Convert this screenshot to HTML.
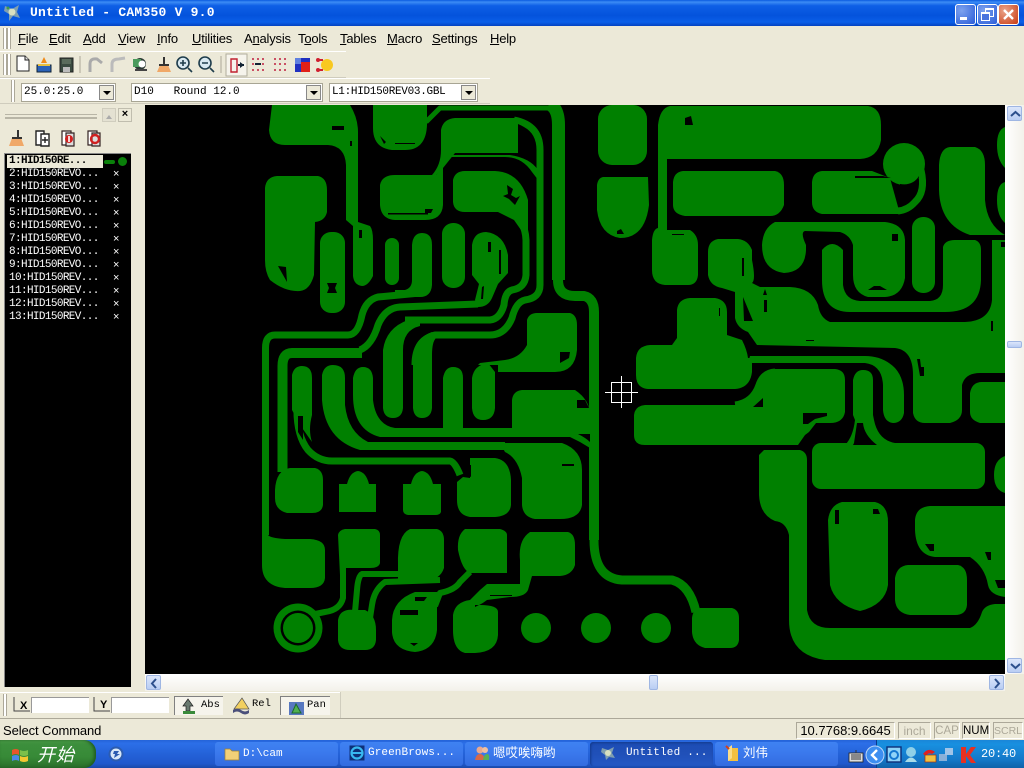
<!DOCTYPE html>
<html><head><meta charset="utf-8"><title>Untitled - CAM350 V 9.0</title>
<style>
html,body{margin:0;padding:0;width:1024px;height:768px;overflow:hidden;background:#ece9d8}
body{position:relative;font-family:"Liberation Sans","Noto Sans CJK SC",sans-serif;font-size:12.5px;color:#000}
.a{position:absolute}
.m{font-family:"Liberation Mono","Noto Sans CJK SC",monospace}
#title{left:0;top:0;width:1024px;height:26px;background:linear-gradient(#0a5be0 0,#3c8cf5 8%,#0e5fe6 22%,#0453dc 60%,#0a5fe8 85%,#0342c0 100%)}
.wb{top:4px;width:19px;height:19px;border:1px solid #fff;border-radius:3px;background:radial-gradient(circle at 30% 30%,#7da2ee,#2a5cd8)}
.mi{top:31px;line-height:15px;font-size:13px;letter-spacing:-.2px}
.mi u{text-decoration:underline}
.tb{background:#ece9d8;box-shadow:inset 0 1px #fff,inset 0 -1px #cfccbd}
.grip{width:2px;background:#fff;border-left:1px solid #aca899;border-right:1px solid #aca899}
.combo{background:#fff;border:1px solid #a8a594;box-sizing:border-box;height:19px;font-size:11px;line-height:17px;padding-left:2px;white-space:pre}
.dd{right:1px;top:1px;width:15px;height:15px;background:#ece9d8;border:1px solid #888;box-sizing:border-box}
.dd:after{content:"";position:absolute;left:3px;top:5px;border:4px solid transparent;border-top:4px solid #000}
.li{left:9px;font-size:11px;letter-spacing:-.62px;color:#fff;line-height:13px;white-space:pre}
.x{left:113px;color:#fff;font-size:11px;line-height:13px}
.sb{background:linear-gradient(#fff,#f3f1ea);}
.sbtn{background:linear-gradient(#dbe6fb,#b9cdf3);border:1px solid #9fb6e3;box-sizing:border-box;border-radius:2px;color:#2c4f8c;font-weight:bold;text-align:center}
.pane{top:722px;height:17px;box-sizing:border-box;border:1px solid;border-color:#aca899 #fff #fff #aca899;font-size:12px;line-height:16px;text-align:center;white-space:pre;overflow:hidden}
#task{left:0;top:740px;width:1024px;height:28px;background:linear-gradient(#2463d8 0,#2c6fe8 12%,#2462d8 50%,#2058cc 85%,#1a48a8 100%)}
.tk{top:2px;height:24px;width:123px;border-radius:3px;background:linear-gradient(#3f82f2,#3a78ec 50%,#336ce0);color:#fff;font-size:11px;line-height:23px;box-sizing:border-box;white-space:pre}
</style></head><body>

<div class="a" id="title"></div>
<svg class="a" style="left:3px;top:3px" width="18" height="19"><path d="M2 3 9 6 16 2 14 9 17 15 10 13 6 18 6 11 1 8Z" fill="#7f9fb0"/><circle cx="9" cy="9" r="3.5" fill="#d8e0c0"/><circle cx="5" cy="5" r="1.5" fill="#3f9a4c"/></svg>
<div class="a m" style="left:30px;top:5px;color:#fff;font-weight:bold;font-size:13px;letter-spacing:.23px;line-height:16px;white-space:pre">Untitled - CAM350 V 9.0</div>
<div class="a wb" style="left:955px"><div class="a" style="left:4px;top:12px;width:7px;height:3px;background:#fff"></div></div>
<div class="a wb" style="left:977px"><div class="a" style="left:7px;top:3px;width:7px;height:6px;border:1px solid #fff;border-top-width:2px"></div><div class="a" style="left:3px;top:7px;width:7px;height:6px;border:1px solid #fff;border-top-width:2px;background:#4a74de"></div></div>
<div class="a wb" style="left:998px;background:radial-gradient(circle at 30% 30%,#eaa48a,#c83a12)"><svg class="a" style="left:3px;top:3px" width="13" height="13"><path d="M2 2 11 11M11 2 2 11" stroke="#fff" stroke-width="2.4"/></svg></div>

<div class="a" style="left:0;top:26px;width:1024px;height:79px;background:#ece9d8"></div>
<div class="a grip" style="left:3px;top:28px;height:21px"></div><div class="a grip" style="left:7px;top:28px;height:21px"></div>
<div class="a mi" style="left:18px"><u>F</u>ile</div>
<div class="a mi" style="left:49px"><u>E</u>dit</div>
<div class="a mi" style="left:83px"><u>A</u>dd</div>
<div class="a mi" style="left:118px"><u>V</u>iew</div>
<div class="a mi" style="left:157px"><u>I</u>nfo</div>
<div class="a mi" style="left:192px"><u>U</u>tilities</div>
<div class="a mi" style="left:244px">A<u>n</u>alysis</div>
<div class="a mi" style="left:298px">T<u>o</u>ols</div>
<div class="a mi" style="left:340px"><u>T</u>ables</div>
<div class="a mi" style="left:387px"><u>M</u>acro</div>
<div class="a mi" style="left:432px"><u>S</u>ettings</div>
<div class="a mi" style="left:490px"><u>H</u>elp</div>

<div class="a tb" style="left:0;top:51px;width:346px;height:27px"></div>
<div class="a tb" style="left:0;top:78px;width:490px;height:26px"></div>
<div class="a grip" style="left:3px;top:54px;height:21px"></div><div class="a grip" style="left:7px;top:54px;height:21px"></div>
<div class="a grip" style="left:11px;top:80px;height:22px"></div>
<svg class="a" style="left:0;top:51px" width="346" height="27">
<path d="M17 5h8l4 4v11H17Z" fill="#fff" stroke="#222"/><path d="M25 5v4h4" fill="#ddd" stroke="#222"/>
<path d="M37 14h14v7H37Z" fill="#2b62b8" stroke="#123"/><path d="M41 12 44 6l3 6Z" fill="#f08a18"/><path d="M38 13h12v2H38Z" fill="#e8c040"/>
<path d="M60 7h13v14H60Z" fill="#3a4a40" stroke="#222"/><path d="M62 8h9v5h-9Z" fill="#5a6b5c"/><path d="M63 16h7v5h-7Z" fill="#bbb"/>
<path d="M80 5v17" stroke="#aca899"/>
<path d="M90 21V13Q90 7 97 8l5 4" fill="none" stroke="#aaa" stroke-width="3"/>
<path d="M112 21V13Q112 8 119 8l6-1" fill="none" stroke="#bbb" stroke-width="3"/>
<circle cx="140" cy="13" r="6" fill="#2d3a35"/><path d="M133 8h8v8h-8Z" fill="#4a9a5c"/><circle cx="142" cy="13" r="3.5" fill="#fff"/><path d="M135 19h12" stroke="#444" stroke-width="2"/>
<path d="M157 21l3-7h8l3 7Z" fill="#f0a868"/><path d="M164 6v8M159 14h10" stroke="#333" stroke-width="2"/>
<circle cx="183" cy="12" r="6" fill="#d8e8f0" stroke="#1f3d4c" stroke-width="1.6"/><path d="M180 12h6M183 9v6M188 17l4 4" stroke="#1f3d4c" stroke-width="1.6"/>
<circle cx="205" cy="12" r="6" fill="#d8e8f0" stroke="#1f3d4c" stroke-width="1.6"/><path d="M202 12h6M210 17l4 4" stroke="#1f3d4c" stroke-width="1.6"/>
<path d="M221 5v17" stroke="#aca899"/>
<path d="M226 3h21v22h-21Z" fill="#f6f4ec" stroke="#b0ad9c"/>
<path d="M231 8h6v13h-6Z" fill="none" stroke="#c02030" stroke-width="1.4"/><path d="M238 14h6" stroke="#123" stroke-width="2"/><path d="M240 11l4 3-4 3Z" fill="#123"/>
<g fill="#c02040"><circle cx="253" cy="8" r="1"/><circle cx="258" cy="8" r="1"/><circle cx="263" cy="8" r="1"/><circle cx="253" cy="19" r="1"/><circle cx="258" cy="19" r="1"/><circle cx="263" cy="19" r="1"/><circle cx="253" cy="13" r="1"/><circle cx="263" cy="13" r="1"/></g><path d="M255 13h6" stroke="#123" stroke-width="2"/>
<g fill="#c02040"><circle cx="275" cy="8" r="1"/><circle cx="280" cy="8" r="1"/><circle cx="285" cy="8" r="1"/><circle cx="275" cy="13" r="1"/><circle cx="280" cy="13" r="1"/><circle cx="285" cy="13" r="1"/><circle cx="275" cy="19" r="1"/><circle cx="280" cy="19" r="1"/><circle cx="285" cy="19" r="1"/></g>
<rect x="295" y="7" width="15" height="14" fill="#2030c0"/><rect x="301" y="11" width="9" height="10" fill="#e02018"/><rect x="295" y="7" width="6" height="6" fill="#6080e0"/>
<circle cx="327" cy="14" r="6" fill="#f8c820"/><path d="M317 9h6M317 19h6" stroke="#d02030" stroke-width="2"/><circle cx="318" cy="9" r="2" fill="#d02030"/><circle cx="318" cy="19" r="2" fill="#d02030"/>
</svg>
<div class="a combo m" style="left:21px;top:83px;width:95px">25.0:25.0<div class="a dd"></div></div>
<div class="a combo m" style="left:131px;top:83px;width:192px">D10   Round 12.0<div class="a dd"></div></div>
<div class="a combo m" style="left:329px;top:83px;width:149px;letter-spacing:-.3px">L1:HID150REV03.GBL<div class="a dd"></div></div>

<!-- left panel -->
<div class="a" style="left:0;top:105px;width:145px;height:585px;background:#ece9d8"></div>
<div class="a" style="left:5px;top:114px;width:92px;height:2px;border-top:1px solid #b8b5a6;border-bottom:1px solid #b8b5a6"></div>
<div class="a" style="left:5px;top:118px;width:92px;height:1px;background:#b8b5a6"></div>
<div class="a" style="left:102px;top:108px;width:14px;height:14px;background:#e4e1d2;border:1px solid #d0cdbe;box-sizing:border-box"><div class="a" style="left:3px;top:3px;border:3px solid transparent;border-bottom:4px solid #aaa"></div></div>
<div class="a" style="left:118px;top:108px;width:14px;height:14px;background:#ece9d8;border:1px solid #c0bdae;box-sizing:border-box;text-align:center;font-weight:bold;font-size:11px;line-height:11px">×</div>
<svg class="a" style="left:0;top:128px" width="110" height="20">
<path d="M9 18l3-8h9l3 8Z" fill="#f0a868"/><path d="M18 2v8M12 10h10" stroke="#333" stroke-width="2"/>
<path d="M36 3h8v14H36Z" fill="#fff" stroke="#222" stroke-width="1.4"/><path d="M41 6h8v12h-8Z" fill="#fff" stroke="#222" stroke-width="1.4"/><path d="M45 9v6M42 12h6" stroke="#222" stroke-width="1.4"/>
<path d="M62 3h9v14H62Z" fill="#fff" stroke="#322" stroke-width="1.2"/><path d="M66 5h8v13h-8Z" fill="#ddd" stroke="#322" stroke-width="1.2"/><circle cx="69" cy="11" r="4" fill="#d02020"/><path d="M69 8v6" stroke="#fff" stroke-width="1.6"/>
<path d="M88 3h9v14H88Z" fill="#fff" stroke="#322" stroke-width="1.2"/><path d="M92 5h8v13h-8Z" fill="#ddd" stroke="#322" stroke-width="1.2"/><circle cx="95" cy="11" r="4" fill="none" stroke="#d02020" stroke-width="2.4"/>
</svg>
<div class="a" style="left:4px;top:153px;width:127px;height:534px;background:#000;border-left:1px solid #888;border-top:1px solid #888;box-sizing:border-box"></div>
<div class="a" style="left:7px;top:155px;width:96px;height:13px;background:#ece9d8"></div>
<div class="a li m" style="top:155px;color:#000;font-weight:bold">1:HID150RE...</div>
<div class="a" style="left:104px;top:160px;width:11px;height:4px;background:#0a800a;border-radius:2px"></div>
<div class="a" style="left:118px;top:157px;width:9px;height:9px;background:#0a800a;border-radius:50%"></div>
<div class="a li m" style="top:168px">2:HID150REVO...</div><div class="a x" style="top:168px">×</div>
<div class="a li m" style="top:181px">3:HID150REVO...</div><div class="a x" style="top:181px">×</div>
<div class="a li m" style="top:194px">4:HID150REVO...</div><div class="a x" style="top:194px">×</div>
<div class="a li m" style="top:207px">5:HID150REVO...</div><div class="a x" style="top:207px">×</div>
<div class="a li m" style="top:220px">6:HID150REVO...</div><div class="a x" style="top:220px">×</div>
<div class="a li m" style="top:233px">7:HID150REVO...</div><div class="a x" style="top:233px">×</div>
<div class="a li m" style="top:246px">8:HID150REVO...</div><div class="a x" style="top:246px">×</div>
<div class="a li m" style="top:259px">9:HID150REVO...</div><div class="a x" style="top:259px">×</div>
<div class="a li m" style="top:272px">10:HID150REV...</div><div class="a x" style="top:272px">×</div>
<div class="a li m" style="top:285px">11:HID150REV...</div><div class="a x" style="top:285px">×</div>
<div class="a li m" style="top:298px">12:HID150REV...</div><div class="a x" style="top:298px">×</div>
<div class="a li m" style="top:311px">13:HID150REV...</div><div class="a x" style="top:311px">×</div>

<!-- canvas -->
<svg class="a" style="left:145px;top:105px;background:#000" width="860" height="569" viewBox="145 105 860 569">
<g fill="#008000">
<!-- upper-left pads -->
<path d="M272 105H350Q358 118 358 132V222L370 226Q373 230 373 240V276Q368 286 362 286Q354 285 353 276V226L346 220V165Q345 146 328 145H285Q270 145 269 130Z"/>
<path d="M373 105H427V125Q426 150 405 150H392Q373 148 373 128Z"/>
<path d="M277 176H318Q327 178 327 190V212Q325 221 315 222L314 275Q310 290 300 291Q285 292 270 280Q265 272 265 260V188Q266 177 277 176Z"/>
<rect x="320" y="232" width="25" height="81" rx="11"/>
<rect x="385" y="238" width="14" height="47" rx="7"/>
<rect x="442" y="223" width="23" height="65" rx="11"/>
<path d="M412 245Q413 233 422 233Q432 233 432 245V285Q431 297 420 297H395V290H405Q412 288 412 280Z"/>
<path d="M472 245Q474 232 486 232Q504 234 508 255V273L498 284L492 298Q488 307 478 307L475 300L479 284L472 275Z"/>
<path d="M453 180Q455 171 465 171H495Q520 172 528 200V240L514 220L498 212H465Q454 212 453 202Z"/>
<path d="M380 185Q382 175 395 175H436L443 167V205Q442 220 425 220H395Q381 219 380 205Z"/>
<path d="M441 130Q443 119 455 118H518V153H455L443 168L436 175L432 175Q441 165 441 150Z"/>
<path d="M450 155H510Q530 158 538 170V160H542V185L532 172Q522 157 505 157H450Z"/>
<!-- bottom area pads -->
<path d="M275 490Q276 470 290 468H315Q323 470 323 480V505Q322 513 312 513H287Q275 510 275 498Z"/>
<path d="M339 484H347Q350 472 358 471Q366 472 369 484H376V512H339Z"/>
<path d="M403 484H411Q414 472 422 471Q430 472 433 484H441V512Q440 515 435 515H408Q403 514 403 510Z"/>
<path d="M463 477L470 478L470 458H495Q510 460 511 480V505Q510 516 495 517H470Q457 515 457 500V482Z"/>
<path d="M500 443H562Q582 450 582 470V505Q580 519 560 519H535Q523 517 522 505V478Q518 458 505 452Z"/>
<path d="M262 530L268 535Q270 538 285 539H310Q325 540 325 550V578Q324 588 310 588H285Q262 586 262 565Z"/>
<path d="M345 529H375Q380 530 380 535V563Q379 568 370 568H345L340 575L338 535Q339 530 345 529Z"/>
<path d="M410 529H437Q444 531 444 540V568Q440 580 425 581H398L398 565Q397 535 410 529Z"/>
<path d="M465 529H500Q507 531 507 535V573H470Q462 570 458 550Q457 535 465 529Z"/>
<path d="M530 532H568Q575 534 575 545V565Q572 575 560 576H532L528 590Q525 597 510 597L487 600L480 605Q498 605 498 612V635Q497 652 475 653H465Q453 650 453 630V615Q455 602 470 600L480 590L487 584H520L520 560Q518 540 530 532Z"/>
<path d="M338 620Q340 608 355 610H365Q376 615 376 630V640Q375 650 365 650H350Q339 650 338 640Z"/>
<path d="M392 620Q393 600 415 592L437 592L437 630Q435 650 415 652Q393 650 392 632Z"/>
<circle cx="298" cy="628" r="24.5"/>
<circle cx="536" cy="628" r="15"/><circle cx="596" cy="628" r="15"/><circle cx="656" cy="628" r="15"/>
<path d="M700 608H732Q739 610 739 618V640Q738 648 730 648H705Q693 645 692 632V618Q693 609 700 608Z"/>
<!-- center bands & pads -->
<path d="M292 375Q294 366 302 366Q312 366 312 378V415Q308 430 312 442L300 425L292 410Z"/>
<path d="M322 375Q324 365 333 365Q345 365 345 378V405Q348 432 368 442H505V450H360Q325 440 322 400Z"/>
<path d="M353 378Q355 367 363 367Q372 367 373 378L373 400Q376 425 395 428H578L585 435Q590 440 590 448L580 442L570 437H380Q353 430 353 395Z"/>
<path d="M383 350Q386 328 408 320L420 322V326Q403 330 403 350V408Q402 418 393 418Q384 418 383 408Z"/>
<path d="M413 355Q415 338 432 332L436 338Q432 342 432 355V408Q431 418 422 418Q414 418 413 408Z"/>
<path d="M443 378Q445 367 453 367Q463 367 463 378V428H443Z"/>
<path d="M472 378Q474 365 488 363L495 372V408Q494 420 483 420Q473 420 472 408Z"/>
<path d="M522 390H575Q590 400 590 415V436H512L500 428H512V400Q513 391 522 390Z"/>
<path d="M527 320Q529 313 537 313H570Q577 315 577 325V350Q575 372 555 372H498V365H478L480 363L505 360Q520 358 527 345Z"/>
<!-- right -->
<rect x="598" y="105" width="49" height="60" rx="14"/>
<path d="M603 177H648L649 205Q645 238 620 238Q600 235 597 210V185Q598 178 603 177Z"/>
<path d="M670 106H868Q881 108 881 125V140Q878 158 860 159H667V230H690Q698 235 698 245V275Q697 285 688 285H665Q652 284 652 270V240Q653 229 658 228V125Q660 108 670 106Z"/>
<path d="M683 171H775Q784 173 784 185V205Q780 216 770 216H685Q673 214 673 205V182Q674 172 683 171Z"/>
<path d="M822 171H872L890 178L900 214H822Q812 212 812 202V182Q813 172 822 171Z"/>
<circle cx="904" cy="164" r="21"/>
<path d="M950 147H975Q985 150 985 165V200Q987 225 1005 235H970Q940 225 939 190V165Q940 148 950 147Z"/>
<path d="M1005 127Q997 130 997 145T1005 168ZM1005 182Q997 184 997 200T1005 223Z"/>
<path d="M775 222H885Q904 224 905 240V278Q902 296 885 297H868Q853 293 853 275V245Q850 235 840 232L805 231Q800 232 806 245V250Q805 272 784 273Q762 270 762 245Q763 228 775 222Z"/>
<rect x="912" y="217" width="23" height="76" rx="11"/>
<path d="M822 250Q832 238 843 250V285Q845 300 860 301H930Q943 300 943 285V247Q945 240 955 240H975Q981 242 981 250V280Q980 312 945 312H850Q822 312 822 280Z"/>
<path d="M1005 240H992V300Q990 321 965 322H830Q820 318 818 305Q812 288 790 287H760L752 283Q756 280 752 260V250Q748 240 738 239H718Q708 241 708 252V275Q710 286 722 288L735 292V318Q737 328 748 332L757 345L895 348Q913 350 913 375V413Q915 423 925 423H950Q962 420 962 410V385Q965 373 980 373H1005Z"/>
<path d="M970 393Q972 382 982 382H1005V423H980Q970 420 970 412Z"/>
<path d="M690 298H715Q727 300 727 312V335L742 340Q747 350 748 358H752V372Q750 388 735 389H648Q636 388 636 375V358Q637 346 650 345H672L677 338V310Q678 299 690 298Z"/>
<path d="M750 356H865Q883 356 895 368Q904 378 904 395V413Q902 423 893 423Q884 422 883 410V385Q882 365 865 363H748Z"/>
<path d="M645 405H738Q755 402 760 385Q763 370 775 369H835Q845 370 845 380V412Q843 423 830 423H816L809 432L805 435L798 445H645Q634 445 634 435V415Q635 406 645 405Z"/>
<path d="M853 380Q855 370 863 370Q873 370 873 380V415L874 420Q878 440 895 443L812 445H845Q853 437 855 420L853 415Z"/>
<rect x="812" y="443" width="173" height="46" rx="9"/>
<path d="M764 450H800Q807 452 807 460V610Q810 628 830 628H970Q978 625 982 612Q985 605 995 604H1005V660H825Q789 655 789 620V535Q786 522 775 521Q760 515 759 495V455Z"/>
<path d="M1005 456Q994 460 994 475T1005 493Z"/>
<path d="M842 502H875Q888 505 888 522V585Q885 605 860 611Q835 605 830 585L828 520Q830 505 842 502Z"/>
<path d="M908 565H958Q967 567 967 580V605Q966 615 955 615H910Q896 613 895 600V578Q897 566 908 565Z"/>
<path d="M930 506H1005V597Q990 595 988 585Q985 567 970 557H935Q916 555 915 530V520Q916 507 930 506Z"/>
</g>
<g fill="none" stroke="#008000" stroke-linejoin="round">
<path stroke-width="5" d="M426 122L440 108H552"/>
<path stroke-width="13" d="M549 104Q558.500 108 558.500 125V280"/>
<path stroke-width="10" d="M558 280Q558 296 575 296H584Q594 298 594 312V540"/>
<path stroke-width="9" d="M594 540Q594 578 622 580H672Q690 585 696 612"/>
<path stroke-width="7" d="M420 293L378 297Q366 300 362 315Q358 335 348 335H275Q265.500 335 265.500 348V535"/>
<path stroke-width="7" d="M478 304 400 307Q385 308 378 325Q372 345 360 350"/>
<path stroke-width="10" d="M362 353H292Q282.500 353 282.500 366V472"/>
<path stroke-width="7" d="M514 120Q540 125 540 150V285Q540 298 525 300Q516 302 512 318Q505 335 490 335H435Q415 340 415 365"/>
<path stroke-width="7" d="M500 205Q525 215 526 240V275Q525 288 512 290Q505 292 504 305Q500 319 490 320H405"/>
<path stroke-width="7" d="M297 405Q296 435 308 450Q318 461 332 461H450Q455 462 460 475"/>
<path stroke-width="5" d="M735 404Q752 402 758 385Q762 372 775 371"/>
<path stroke-width="6" d="M343 565 343 598Q340 610 325 612L310 615"/>
<path stroke-width="6" d="M398 574H362Q358 576 357 590L355 612"/>
<path stroke-width="6" d="M440 580 385 582Q374 590 372 605L370 618"/>
<path stroke-width="6" d="M470 572 460 582Q455 590 440 593L435 606"/>
<path stroke-width="7" d="M921 170Q926 192 915 202Q908 210 898 211"/>
</g>
<!-- black details -->
<g fill="#000">
<circle cx="298" cy="628" r="17.500"/><circle cx="298" cy="628" r="15" fill="#008000"/>
<rect x="332" y="126" width="12" height="4"/><rect x="350" y="141" width="2" height="5"/>
<path d="M380 136l6 6-2 2ZM395 143h20v1h-20Z"/><rect x="388" y="213" width="40" height="1.500"/><path d="M425 209h8l-2 4h-6Z"/>
<path d="M278 266l8 1 1 15Z"/><path d="M327 283h10l-2 5 2 5h-10l2-5Z"/><rect x="359" y="230" width="3" height="8"/>
<path d="M507 185l6 4-2 6 5 3 4-2-5 9-6-6-6-3 5-2Z"/>
<path d="M488 242h3v10h-3ZM499 250h2v24h-2ZM482 287l2-1-1 13-2 0Z"/>
<path d="M518 124Q535 130 534 158L518 151Z"/>
<path d="M560 352h10l-1 6-9 5ZM463 465h8v12l-6-3Z"/>
<path d="M298 416h5v24l-5-8ZM577 400h8l4 8h-12ZM578 434h12v8Q586 438 578 434ZM580 385h8v12Z"/>
<rect x="562" y="464" width="12" height="2"/><rect x="490" y="595" width="22" height="1"/>
<path d="M415 597h12l-3 4h-9ZM400 610h18v5h-18ZM410 643h8l-4 3Z"/><path d="M475 605h12v-4l-6 3-6 3Z"/>
<path d="M685 118l6-2 2 9h-8ZM617 231l4-2 3 5h-7ZM610 191l1 1Z"/>
<path d="M855 176h28l8 2-4 0h-32Z"/>
<path d="M900 184Q913 186 919 176Q918 195 900 205Z"/>
<path d="M868 290l6-4h6l7 4Z"/><path d="M892 234h6v7h-6Z"/>
<rect x="672" y="234" width="12" height="1"/><path d="M743 297l10 24h-9Z"/><rect x="742" y="258" width="2" height="18"/><rect x="764" y="300" width="3" height="12"/>
<rect x="806" y="340" width="8" height="1"/><path d="M991 321h2v10h-2ZM917 359h3l1 8h3v9h-4Z"/>
<path d="M765 289l2 6-4 0Z"/>
<path d="M803 413H827V416L815 419L808 424H803Z"/><path d="M753 407l10-9v9Z"/>
<rect x="835" y="510" width="4" height="14"/><path d="M873 509h5l2 5h-7Z"/>
<path d="M925 544h9v7h-4ZM985 552h6v8h-3ZM995 580h10v8h-7Z"/>
<rect x="676" y="308" width="1" height="8"/><rect x="719" y="308" width="1" height="8"/>
<rect x="1001" y="242" width="4" height="5"/>
<path d="M860 423h-3l-3 20-1 2h24q-13-10-14-22Z"/>
</g>
<!-- crosshair -->
<g fill="none" stroke="#fff" stroke-width="1">
<rect x="611.500" y="382.500" width="20" height="20"/>
<path d="M605 392.500H638M621.500 376V408"/>
</g>
</svg>

<!-- scrollbars -->
<div class="a sb" style="left:1005px;top:105px;width:19px;height:569px;background:linear-gradient(90deg,#fff,#f3f1ea)"></div>
<div class="a sbtn" style="left:1007px;top:106px;width:15px;height:15px"><svg class="a" style="left:2px;top:3px" width="11" height="8"><path d="M1 6 5.500 2 10 6" fill="none" stroke="#2c4f8c" stroke-width="2"/></svg></div>
<div class="a sbtn" style="left:1007px;top:341px;width:15px;height:7px"></div>
<div class="a sbtn" style="left:1007px;top:658px;width:15px;height:15px"><svg class="a" style="left:2px;top:3px" width="11" height="8"><path d="M1 2 5.500 6 10 2" fill="none" stroke="#2c4f8c" stroke-width="2"/></svg></div>
<div class="a sb" style="left:145px;top:674px;width:860px;height:17px"></div>
<div class="a sbtn" style="left:146px;top:675px;width:15px;height:15px"><svg class="a" style="left:3px;top:2px" width="8" height="11"><path d="M6 1 2 5.500 6 10" fill="none" stroke="#2c4f8c" stroke-width="2"/></svg></div>
<div class="a sbtn" style="left:649px;top:675px;width:9px;height:15px"></div>
<div class="a sbtn" style="left:989px;top:675px;width:15px;height:15px"><svg class="a" style="left:3px;top:2px" width="8" height="11"><path d="M2 1 6 5.500 2 10" fill="none" stroke="#2c4f8c" stroke-width="2"/></svg></div>

<!-- coord toolbar -->
<div class="a" style="left:0;top:692px;width:1024px;height:27px;background:#ece9d8;box-shadow:inset 0 -1px #aca899"></div>
<div class="a" style="left:0;top:692px;width:341px;height:26px;box-shadow:inset -1px 0 #d0cdbe,inset 0 1px #fff"></div>
<div class="a grip" style="left:3px;top:694px;height:22px"></div>
<svg class="a" style="left:12px;top:696px" width="100" height="20"><path d="M2 1V15H18" fill="none" stroke="#444"/><path d="M82 1V15H98" fill="none" stroke="#444"/><text x="8" y="13" font-family="Liberation Sans" font-size="11" font-weight="bold">X</text><text x="88" y="12" font-family="Liberation Sans" font-size="11" font-weight="bold">Y</text></svg>
<div class="a" style="left:31px;top:697px;width:58px;height:16px;background:#fff;border-top:1px solid #999;border-left:1px solid #999;box-sizing:border-box"></div>
<div class="a" style="left:111px;top:697px;width:58px;height:16px;background:#fff;border-top:1px solid #999;border-left:1px solid #999;box-sizing:border-box"></div>
<div class="a" style="left:174px;top:696px;width:49px;height:19px;background:#f6f4ec;border-top:1px solid #808080;border-left:1px solid #808080;box-sizing:border-box"></div>
<div class="a" style="left:280px;top:696px;width:50px;height:19px;background:#f6f4ec;border-top:1px solid #808080;border-left:1px solid #808080;box-sizing:border-box"></div>
<svg class="a" style="left:182px;top:697px" width="140" height="20"><path d="M1 9 6 2 11 9H8V14H4V9Z" fill="#6a7a70" stroke="#222" stroke-width=".7"/><path d="M1 14h12v3H1Z" fill="#3a8a3a"/>
<path d="M52 12 60 1 67 12Z" fill="#f2d060" stroke="#555" stroke-width=".7"/><path d="M51 13q4-3 8 0t8 0v3q-4 3-8 0t-8 0Z" fill="#4a4f7a"/>
<rect x="107" y="5" width="15" height="13" fill="#5878c0"/><path d="M110 16 114 7 119 16Z" fill="#50b050" stroke="#1c6a2c"/></svg>
<div class="a m" style="left:201px;top:699px;font-size:10.500px;line-height:13px;letter-spacing:0">Abs</div>
<div class="a m" style="left:252px;top:698px;font-size:10.500px;line-height:13px">Rel</div>
<div class="a m" style="left:307px;top:699px;font-size:10.500px;line-height:13px">Pan</div>

<!-- status -->
<div class="a" style="left:0;top:719px;width:1024px;height:21px;background:#ece9d8"></div>
<div class="a" style="left:3px;top:723px;font-size:13px;line-height:15px;letter-spacing:-.1px">Select Command</div>
<div class="a pane" style="left:796px;width:99px;font-size:13px">10.7768:9.6645</div>
<div class="a pane" style="left:898px;width:33px;color:#aca899">inch</div>
<div class="a pane" style="left:934px;width:26px;color:#aca899;font-size:11.500px">CAP</div>
<div class="a pane" style="left:962px;width:28px;font-size:11.500px">NUM</div>
<div class="a pane" style="left:993px;width:30px;color:#aca899;font-size:10.500px">SCRL</div>

<!-- taskbar -->
<div class="a" id="task"></div>
<div class="a" style="left:0;top:740px;width:96px;height:28px;background:linear-gradient(#4da04a 0,#3c8f3c 15%,#378a37 60%,#2a6e2a 100%);border-radius:0 12px 12px 0;box-shadow:inset -2px 0 3px #1f5a1f"></div>
<svg class="a" style="left:10px;top:746px" width="20" height="18"><path d="M2 4Q6 2 9 4V9Q6 7 2 9Z" fill="#e8562c"/><path d="M10 4Q14 6 18 4V9Q14 11 10 9Z" fill="#7cc04a"/><path d="M2 10Q6 8 9 10V15Q6 13 2 15Z" fill="#4a88e8"/><path d="M10 10Q14 12 18 10V15Q14 17 10 15Z" fill="#f4c830"/></svg>
<div class="a" style="left:37px;top:742px;color:#fff;font-style:italic;font-size:18px;line-height:24px;letter-spacing:1px;font-family:'Noto Sans CJK SC',sans-serif">开始</div>
<svg class="a" style="left:108px;top:745px" width="18" height="18"><circle cx="8" cy="9" r="6.500" fill="#d8e8f8" stroke="#2c5cb0" stroke-width="2"/><path d="M6 6h5l-2 3h3l-6 4 1-4H5Z" fill="#2c5cb0"/></svg>

<div class="a tk" style="left:215px;top:742px;padding-left:28px"><span class="m">D:\cam</span></div>
<svg class="a" style="left:224px;top:746px" width="16" height="15"><path d="M1 3h5l2 2h7v9H1Z" fill="#f2d078" stroke="#a08030" stroke-width=".7"/></svg>
<div class="a tk m" style="left:340px;top:742px;padding-left:28px;letter-spacing:.1px">GreenBrows...</div>
<svg class="a" style="left:349px;top:745px" width="16" height="16"><rect x=".5" y=".5" width="15" height="15" fill="#0d2f78"/><circle cx="8" cy="8" r="5.500" fill="none" stroke="#38b8f0" stroke-width="2.200"/><path d="M3 8h10" stroke="#38b8f0" stroke-width="2"/></svg>
<div class="a tk" style="left:465px;top:742px;padding-left:28px;font-size:12.500px">嗯哎唉嗨哟</div>
<svg class="a" style="left:474px;top:745px" width="16" height="16"><circle cx="6" cy="5" r="3.500" fill="#e8a890"/><circle cx="11" cy="5" r="3" fill="#f0c0a0"/><path d="M1 15Q2 9 6 9T11 15Z" fill="#d86848"/><path d="M9 15Q10 9 13 9T15 15Z" fill="#58b058"/></svg>
<div class="a tk m" style="left:590px;top:742px;padding-left:36px;background:linear-gradient(#1c4cb4,#2050b8 50%,#2458c4);box-shadow:inset 1px 1px 2px #133a8c;letter-spacing:.2px">Untitled ...</div>
<svg class="a" style="left:600px;top:745px" width="16" height="16"><path d="M2 3 8 5 14 2 12 8 15 13 9 12 6 15 5 10 1 7Z" fill="#7f9fb0"/><circle cx="8" cy="8" r="3" fill="#d8e0c0"/></svg>
<div class="a tk" style="left:715px;top:742px;padding-left:28px;font-size:12.500px">刘伟</div>
<svg class="a" style="left:725px;top:745px" width="15" height="17"><path d="M3 3h10v13H3Z" fill="#f4c040"/><path d="M3 3 7 0v13l-4 3Z" fill="#fbdc88"/><path d="M1 1 4 4" stroke="#d04020" stroke-width="2"/></svg>

<div class="a" style="left:876px;top:740px;width:148px;height:28px;background:linear-gradient(#1a86d8 0,#1890e0 15%,#1478c8 70%,#1062a8 100%);border-left:1px solid #0a3a8c;box-sizing:border-box"></div>
<svg class="a" style="left:848px;top:744px" width="176" height="22">
<rect x="1" y="9" width="14" height="9" fill="#ddd" stroke="#222" stroke-width=".8"/><path d="M3 11h10M3 13h10M3 15h10" stroke="#333" stroke-width="1"/><path d="M8 9V6" stroke="#333"/>
<circle cx="27" cy="11" r="9" fill="#3d8ef0" stroke="#bcd6f8"/><path d="M29 6 24 11l5 5" fill="none" stroke="#fff" stroke-width="2.400"/>
<rect x="39" y="3" width="14" height="15" fill="#8fd4f8" stroke="#0d2f78" stroke-width="1.400"/><circle cx="46" cy="11" r="4" fill="none" stroke="#1478d0" stroke-width="2"/>
<circle cx="63" cy="8" r="5" fill="#8fd0e8"/><path d="M57 18q6-9 12 0Z" fill="#a8dce8"/>
<path d="M75 10Q80 3 87 8L84 10Q80 8 78 12Z" fill="#e02020"/><rect x="77" y="11" width="11" height="7" fill="#f0c040" stroke="#a03010" stroke-width=".7"/>
<rect x="91" y="10" width="8" height="7" fill="#8ab0d8"/><rect x="97" y="4" width="8" height="7" fill="#a0c4e8"/>
<path d="M113 3h5v7l5-7h5l-6 8 6 8h-5l-5-7v7h-5Z" fill="#e83020"/>
</svg>
<div class="a m" style="left:981px;top:747px;color:#fff;font-size:12px;line-height:14px;letter-spacing:-.2px">20:40</div>
</body></html>
